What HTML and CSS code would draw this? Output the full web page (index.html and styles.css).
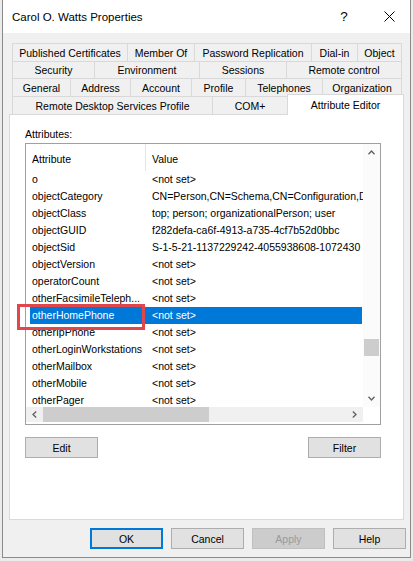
FILE: index.html
```html
<!DOCTYPE html>
<html>
<head>
<meta charset="utf-8">
<link rel="stylesheet" href="styles.css">
</head>
<body>
<div class="window">
  <div class="titlebar">
    <span class="title">Carol O. Watts Properties</span>
    <span class="help">?</span>
    <span class="close"><svg width="11" height="11" viewBox="0 0 11 11"><path d="M0.5 0.5 L10.5 10.5 M10.5 0.5 L0.5 10.5" stroke="#000" stroke-width="1" fill="none"/></svg></span>
  </div>
  <div class="tabs">
    <div class="tabrow r1">
      <div class="tab w-pub">Published Certificates</div>
      <div class="tab w-mem">Member Of</div>
      <div class="tab w-pwd">Password Replication</div>
      <div class="tab w-dial">Dial-in</div>
      <div class="tab w-obj">Object</div>
    </div>
    <div class="tabrow r2">
      <div class="tab w-sec">Security</div>
      <div class="tab w-env">Environment</div>
      <div class="tab w-ses">Sessions</div>
      <div class="tab w-rem">Remote control</div>
    </div>
    <div class="tabrow r3">
      <div class="tab w-gen">General</div>
      <div class="tab w-addr">Address</div>
      <div class="tab w-acc">Account</div>
      <div class="tab w-prof">Profile</div>
      <div class="tab w-tel">Telephones</div>
      <div class="tab w-org">Organization</div>
    </div>
    <div class="tabrow r4">
      <div class="tab w-rds">Remote Desktop Services Profile</div>
      <div class="tab w-com">COM+</div>
      <div class="tab w-attr selected">Attribute Editor</div>
    </div>
  </div>
  <div class="panel">
    <div class="label">Attributes:</div>
    <div class="listbox">
      <div class="lv-main">
        <div class="lv-header">
          <div class="hcell hcell1">Attribute</div>
          <div class="hcell hcell2">Value</div>
        </div>
        <div class="lv-rows">
          <div class="row"><div class="c1">o</div><div class="c2">&lt;not set&gt;</div></div>
          <div class="row"><div class="c1">objectCategory</div><div class="c2">CN=Person,CN=Schema,CN=Configuration,D</div></div>
          <div class="row"><div class="c1">objectClass</div><div class="c2">top; person; organizationalPerson; user</div></div>
          <div class="row"><div class="c1">objectGUID</div><div class="c2">f282defa-ca6f-4913-a735-4cf7b52d0bbc</div></div>
          <div class="row"><div class="c1">objectSid</div><div class="c2">S-1-5-21-1137229242-4055938608-1072430</div></div>
          <div class="row"><div class="c1">objectVersion</div><div class="c2">&lt;not set&gt;</div></div>
          <div class="row"><div class="c1">operatorCount</div><div class="c2">&lt;not set&gt;</div></div>
          <div class="row"><div class="c1">otherFacsimileTeleph...</div><div class="c2">&lt;not set&gt;</div></div>
          <div class="row sel"><div class="c1">otherHomePhone</div><div class="c2">&lt;not set&gt;</div></div>
          <div class="row"><div class="c1">otherIpPhone</div><div class="c2">&lt;not set&gt;</div></div>
          <div class="row"><div class="c1">otherLoginWorkstations</div><div class="c2">&lt;not set&gt;</div></div>
          <div class="row"><div class="c1">otherMailbox</div><div class="c2">&lt;not set&gt;</div></div>
          <div class="row"><div class="c1">otherMobile</div><div class="c2">&lt;not set&gt;</div></div>
          <div class="row"><div class="c1">otherPager</div><div class="c2">&lt;not set&gt;</div></div>
        </div>
      </div>
      <div class="vscroll">
        <div class="arrow"><svg width="7" height="5" viewBox="0 0 7 5"><path d="M0.5 4.2 L3.5 1 L6.5 4.2" stroke="#606060" stroke-width="1.3" fill="none"/></svg></div>
        <div class="vtrack"><div class="vthumb"></div></div>
        <div class="arrow"><svg width="7" height="5" viewBox="0 0 7 5"><path d="M0.5 0.8 L3.5 4 L6.5 0.8" stroke="#606060" stroke-width="1.3" fill="none"/></svg></div>
      </div>
      <div class="hscroll">
        <div class="harrow"><svg width="5" height="7" viewBox="0 0 5 7"><path d="M4.2 0.5 L1 3.5 L4.2 6.5" stroke="#606060" stroke-width="1.3" fill="none"/></svg></div>
        <div class="hthumb"></div>
        <div class="htrack"></div>
        <div class="harrow"><svg width="5" height="7" viewBox="0 0 5 7"><path d="M0.8 0.5 L4 3.5 L0.8 6.5" stroke="#606060" stroke-width="1.3" fill="none"/></svg></div>
      </div>
      <div class="corner"></div>
    </div>
    <div class="panel-buttons">
      <button class="btn">Edit</button>
      <button class="btn">Filter</button>
    </div>
  </div>
  <div class="dialog-buttons">
    <button class="btn default">OK</button>
    <button class="btn">Cancel</button>
    <button class="btn disabled">Apply</button>
    <button class="btn">Help</button>
  </div>
  <div class="annot"></div>
</div>
</body>
</html>
```
FILE: styles.css
```css
body {
  margin: 0;
  background: #ebebeb;
  font-family: "Liberation Sans", Arial, sans-serif;
  font-size: 10.5px;
  color: #000;
}
.window {
  position: relative;
  margin-left: 2px;
  width: 407px;
  height: 557px;
  border: 1px solid #8a8a8a;
  border-top: none;
  background: #f0f0f0;
}
.titlebar {
  height: 33px;
  background: #fff;
  display: flex;
  align-items: center;
  padding: 0 11px 0 9px;
}
.title {
  flex: 1;
  font-size: 11.5px;
}
.help {
  width: 20px;
  text-align: center;
  font-size: 13.5px;
}
.close {
  width: 20px;
  margin-left: 25px;
  display: flex;
  justify-content: center;
}
.tabs {
  padding: 10px 0 0 9px;
}
.tabrow {
  display: flex;
  height: 18px;
}
.tabrow.r2 { height: 17px; }
.tab {
  box-sizing: border-box;
  height: 100%;
  border: 1px solid #d9d9d9;
  border-bottom: none;
  margin-right: -1px;
  display: flex;
  align-items: center;
  justify-content: center;
  white-space: nowrap;
  background: #f0f0f0;
}
.tab.selected {
  position: relative;
  z-index: 2;
  align-self: flex-start;
  height: 21px;
  margin-top: -2px;
  background: #fff;
  padding-bottom: 1px;
}
.w-pub { width: 116px; }
.w-mem { width: 68px; }
.w-pwd { width: 118px; }
.w-dial { width: 47px; }
.w-obj { width: 45px; }
.w-sec { width: 83px; }
.w-env { width: 106px; }
.w-ses { width: 88px; }
.w-rem { width: 116px; }
.w-gen { width: 59px; }
.w-addr { width: 61px; }
.w-acc { width: 62px; }
.w-prof { width: 55px; }
.w-tel { width: 78px; }
.w-org { width: 80px; }
.w-rds { width: 201px; }
.w-com { width: 76px; }
.w-attr { width: 117px; }
.panel {
  position: relative;
  z-index: 1;
  margin-left: 6px;
  width: 395px;
  height: 406px;
  box-sizing: border-box;
  border: 1px solid #d9d9d9;
  background: #fff;
}
.label {
  padding: 12px 0 0 15px;
  height: 14px;
  line-height: 14px;
}
.listbox {
  margin: 2px 0 0 15px;
  width: 356px;
  height: 282px;
  box-sizing: border-box;
  border: 1px solid #a0a0a0;
  display: grid;
  grid-template-columns: 337px 17px;
  grid-template-rows: 263px 17px;
}
.lv-main {
  overflow: hidden;
}
.lv-header {
  display: flex;
  height: 27px;
}
.hcell {
  box-sizing: border-box;
  padding: 8px 0 0 6px;
  line-height: 14px;
}
.hcell1 {
  width: 120px;
  border-right: 1px solid #e5e5e5;
}
.lv-rows {
  height: 236px;
  overflow: hidden;
  padding-left: 4px;
}
.row {
  display: flex;
  height: 17px;
  line-height: 17px;
  width: 332px;
  white-space: nowrap;
}
.c1 {
  box-sizing: border-box;
  width: 122px;
  padding-left: 2px;
  flex: none;
}
.c2 {
  flex: 1;
  min-width: 0;
}
.row.sel {
  background: #0078d7;
  color: #fff;
}
.vscroll {
  display: flex;
  flex-direction: column;
  background: #fbfbfb;
}
.arrow {
  height: 17px;
  display: flex;
  align-items: center;
  justify-content: center;
}
.vtrack {
  flex: 1;
}
.vthumb {
  margin: 178px auto 0;
  width: 15px;
  height: 17px;
  background: #cdcdcd;
}
.hscroll {
  display: flex;
  background: #f0f0f0;
  height: 15px;
}
.harrow {
  width: 17px;
  display: flex;
  align-items: center;
  justify-content: center;
}
.hthumb {
  width: 166px;
  background: #cdcdcd;
}
.htrack {
  flex: 1;
}
.corner {
  background: #fff;
}
.btn {
  box-sizing: border-box;
  width: 73px;
  height: 21px;
  padding: 0;
  margin: 0;
  font-family: inherit;
  font-size: 10.5px;
  color: #000;
  background: #e1e1e1;
  border: 1px solid #adadad;
}
.btn.default {
  border: 2px solid #0078d7;
}
.btn.disabled {
  background: #cccccc;
  border-color: #bfbfbf;
  color: #9a9a9a;
}
.panel-buttons {
  display: flex;
  justify-content: space-between;
  margin: 12px 0 0 15px;
  width: 356px;
}
.dialog-buttons {
  display: flex;
  justify-content: flex-end;
  gap: 8px;
  padding-right: 4px;
  margin-top: 8px;
}
.annot {
  position: absolute;
  left: 14px;
  top: 304px;
  width: 128px;
  height: 26px;
  box-sizing: border-box;
  border: 3px solid #e0474c;
  z-index: 5;
}
```
